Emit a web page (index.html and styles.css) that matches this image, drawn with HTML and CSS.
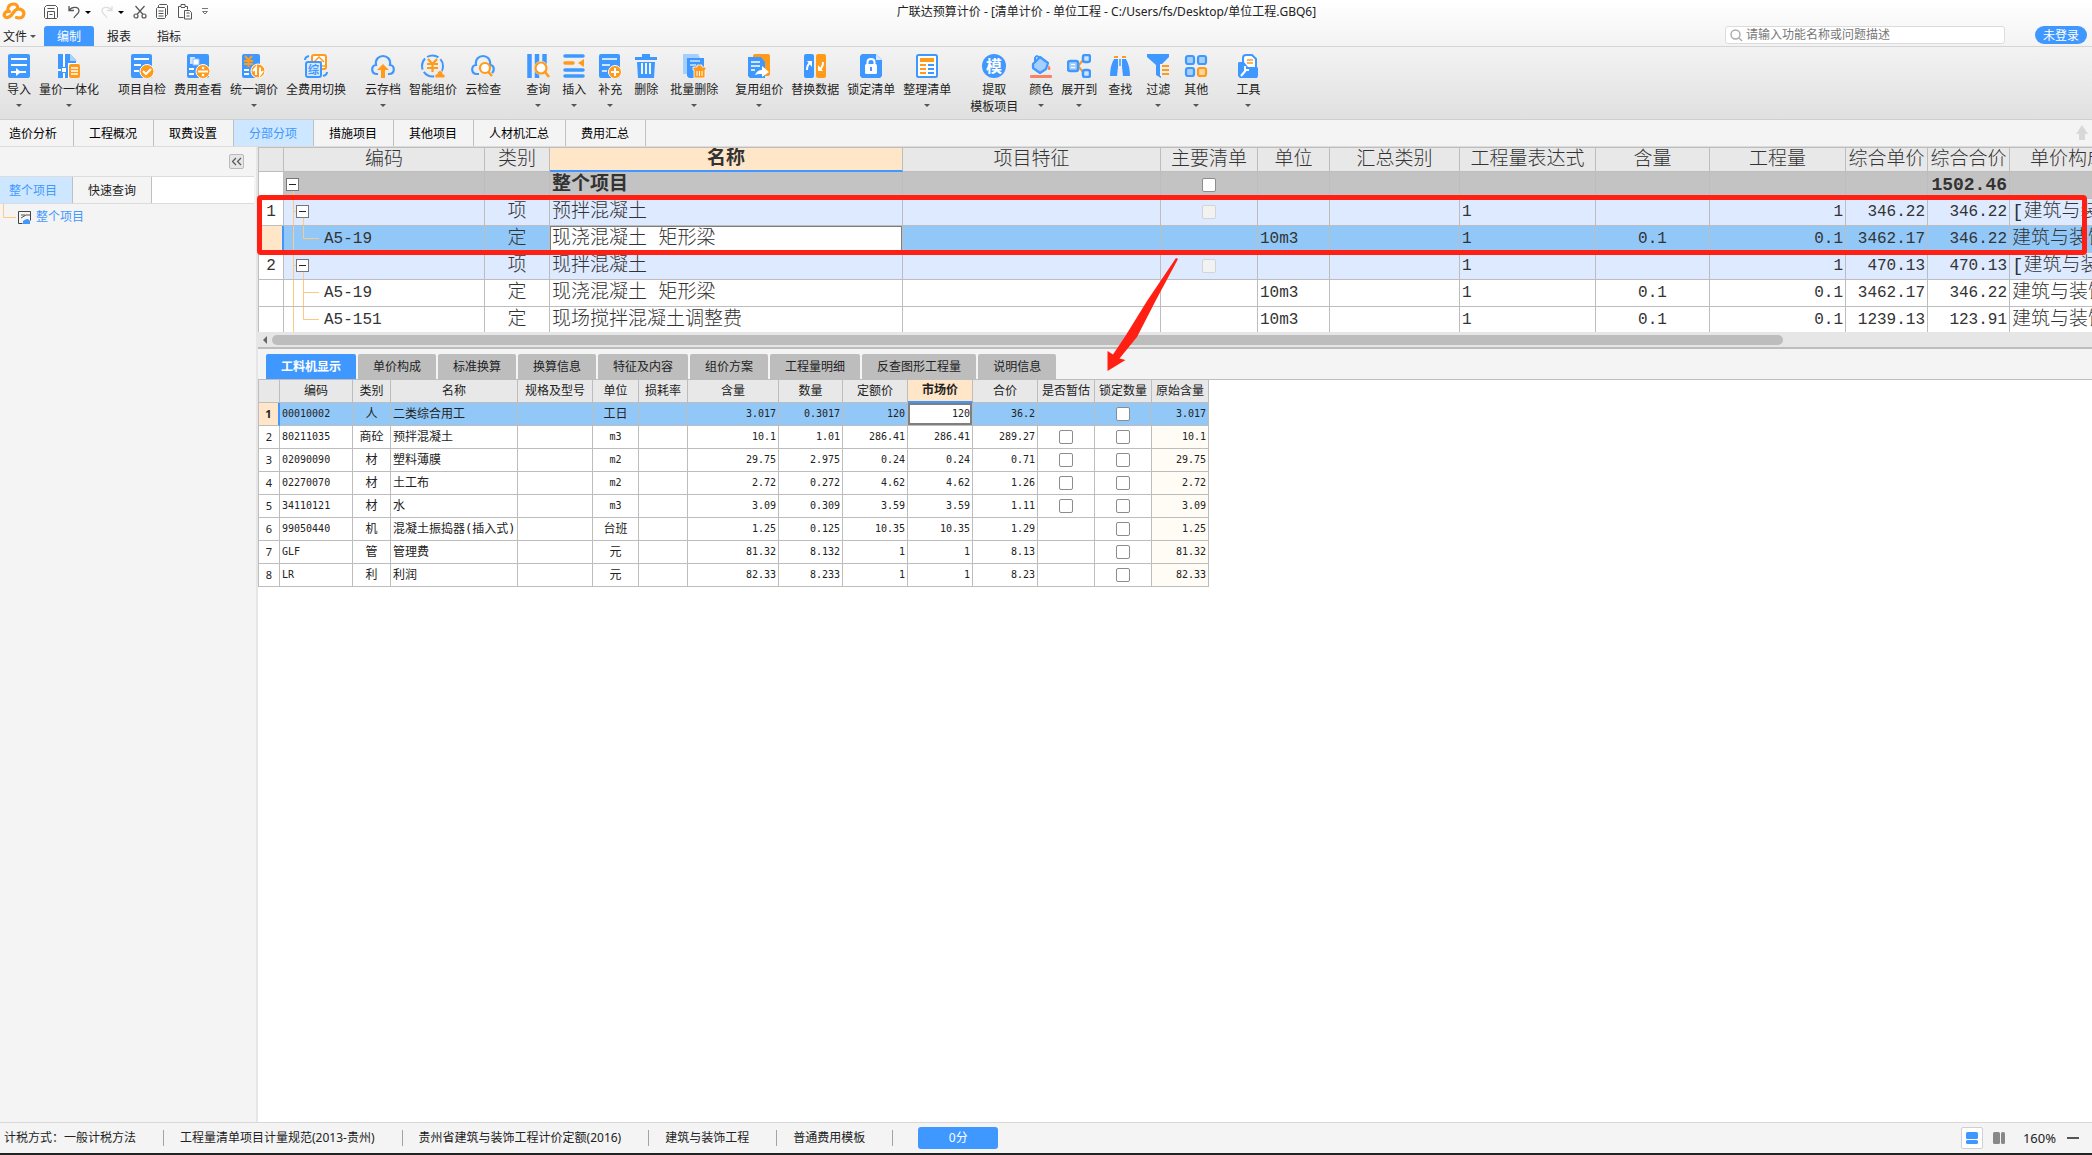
FILE: index.html
```html
<!DOCTYPE html>
<html lang="zh-CN">
<head>
<meta charset="utf-8">
<title>广联达预算计价</title>
<link rel="stylesheet" href="styles.css">
</head>
<body>
<header class="top">
  <div class="titlebar">
    <svg class="logo" width="24" height="18" viewBox="0 0 24 18" fill="none" stroke="#ff9a1a" stroke-width="3.2" stroke-linecap="round" stroke-linejoin="round"><path d="M7.500 9.500C2 9 .500 14.500 4.500 15.500C8 16 9.500 13 11 11C13 8 16 6 19 7.500C23.500 9.500 22.500 16 17 16L14.500 15.500M6 8C5.500 4 8.500 2 11.500 2C14 2 15.500 3.500 15.500 5"/></svg>
    <div class="quick">
      <button aria-label="保存"><svg width="16" height="16" viewBox="0 0 16 16" fill="none" stroke="#555"><path d="M1.500 3.500l2-2h9l2 2v10l-1 1h-11l-1-1zM4.500 14.500v-7h7v7M4.500 4.500h7M6.500 10.500h3"/></svg></button>
      <button aria-label="撤销"><svg width="14" height="14" viewBox="0 0 14 14" fill="none" stroke="#555" stroke-width="1.3"><path d="M2 1v4.500h5M2 5.500C5 1 12 1.500 12 6C12 9 8 10 7 13"/></svg></button>
      <button class="drop" aria-label="撤销列表"><i class="arrow"></i></button>
      <button aria-label="重做"><svg width="14" height="14" viewBox="0 0 14 14" fill="none" stroke="#ddd" stroke-width="1.3"><path d="M12 1v4.500h-5M12 5.500C9 1 2 1.500 2 6C2 9 6 10 7 13"/></svg></button>
      <button class="drop" aria-label="重做列表"><i class="arrow"></i></button>
      <button aria-label="剪切"><svg width="14" height="14" viewBox="0 0 14 14" fill="none" stroke="#555" stroke-width="1.2"><circle cx="3" cy="11" r="2"/><circle cx="11" cy="11" r="2"/><path d="M4 9.500L11.500 1M10 9.500L2.500 1"/></svg></button>
      <button aria-label="复制"><svg width="14" height="16" viewBox="0 0 14 16" fill="none" stroke="#555"><path d="M3.500 3.500v-2l1-1h7l1 1v9l-1 1h-1M1.500 4.500l1-1h7l1 1v9l-1 1h-7l-1-1zM3.500 7h5M3.500 9.500h5M3.500 12h5"/></svg></button>
      <button aria-label="粘贴"><svg width="16" height="16" viewBox="0 0 16 16" fill="none" stroke="#555"><path d="M6.500 13.500h-5v-11h2.500v-2h4v2h2.500v3M4 3.500h4M7.500 6.500h5l2 2v6.500h-7zM9.500 9h3M9.500 12h3"/></svg></button>
      <button aria-label="自定义"><svg width="8" height="8" viewBox="0 0 8 8" fill="none" stroke="#777"><path d="M1 .500h6M1.500 3.500h5L4 6z"/></svg></button>
    </div>
    <h1>广联达预算计价 - [清单计价 - 单位工程 - C:/Users/fs/Desktop/单位工程.GBQ6]</h1>
  </div>
  <nav class="menubar">
    <button class="file">文件<i class="arrow"></i></button>
    <button class="on">编制</button>
    <button>报表</button>
    <button>指标</button>
    <label class="search"><svg width="13" height="13" viewBox="0 0 13 13" fill="none" stroke="#aaa" stroke-width="1.400"><circle cx="5.500" cy="5.500" r="4.500"/><path d="M9 9l3 3"/></svg><input type="text" placeholder="请输入功能名称或问题描述" aria-label="搜索"></label>
    <button class="login">未登录</button>
  </nav>
</header>

<div class="ribbon">
  <div class="group">
    <button><svg viewBox="0 0 24 24"><rect x="1" width="22" height="24" rx="2" fill="#3f98ff"/><g stroke="#fff" stroke-width="2"><path d="M4 5h16M4 11h16"/><path d="M4 18h5M12 18h7"/></g><path d="M9 14l5 4-5 4z" fill="#fff"/></svg><span>导入</span><i class="arrow"></i></button>
    <button><svg viewBox="0 0 24 24"><path d="M1 0h12l6 6v18H1z" fill="#3f98ff"/><path d="M13 0l7 7h-7z" fill="#a9d2ff"/><path d="M7 0v13M1 16h3M7 19v5" stroke="#fff" stroke-width="2"/><rect x="5" y="14" width="4" height="4" fill="#fff"/><path d="M11 9h11v15H11z" fill="#fff"/><rect x="12" y="10" width="11" height="14" rx="2" fill="#ff9a1a"/><path d="M14 14h7M14 17h7M14 20h7" stroke="#fff" stroke-width="1.500"/></svg><span>量价一体化</span><i class="arrow"></i></button>
  </div>
  <div class="group">
    <button><svg viewBox="0 0 24 24"><rect x="1" width="21" height="24" rx="2" fill="#3f98ff"/><path d="M4 5h15M4 11h7M4 17h5" stroke="#fff" stroke-width="2"/><circle cx="17" cy="17.500" r="7" fill="#ff9a1a" stroke="#fff"/><path d="M13 17l3 3 5-5" fill="none" stroke="#fff" stroke-width="2"/></svg><span>项目自检</span></button>
    <button><svg viewBox="0 0 24 24"><rect x="1" width="22" height="24" rx="2" fill="#3f98ff"/><path d="M4 3h5v7H4z" fill="#cfe5ff"/><path d="M7 5h6v6H7z" fill="#fff" stroke="#8fc2ff"/><path d="M3 15h5M3 20h5" stroke="#fff" stroke-width="2"/><circle cx="17" cy="17.500" r="7" fill="#ff9a1a" stroke="#fff"/><path d="M12 17.500h10" stroke="#fff" stroke-width="2"/><circle cx="17" cy="14" r="1.300" fill="#fff"/><circle cx="17" cy="21" r="1.300" fill="#fff"/></svg><span>费用查看</span></button>
    <button><svg viewBox="0 0 24 24"><rect width="18" height="24" rx="2" fill="#3f98ff"/><path d="M3 2l3.500 4L10 2M2 7h9M2 10h9M6.500 6v7" fill="none" stroke="#ff9a1a" stroke-width="2"/><path d="M2 16h5M2 20h5" stroke="#fff" stroke-width="2"/><circle cx="16" cy="17" r="7" fill="#ff9a1a" stroke="#fff"/><path d="M11 17l3-3.500v7.500M21 17l-3 4v-7.500" fill="none" stroke="#fff" stroke-width="2"/></svg><span>统一调价</span><i class="arrow"></i></button>
    <button><svg viewBox="0 0 24 24"><rect x="8" y="1" width="14" height="14" rx="2" fill="#fff" stroke="#ff9a1a" stroke-width="2"/><path d="M10 8l5-5 5 5M12 8h6M15 8v4M18 12h3" fill="none" stroke="#ff9a1a" stroke-width="1.500"/><rect x="2" y="8" width="15" height="15" rx="2" fill="#d7eaff" stroke="#3f98ff" stroke-width="2"/><text x="4" y="20" font-size="11" font-weight="700" fill="#3f98ff">综</text><path d="M1 6q0-3 4-4M23 18q0 3-4 4" fill="none" stroke="#3f98ff" stroke-width="2"/></svg><span>全费用切换</span></button>
  </div>
  <div class="group">
    <button><svg viewBox="0 0 24 24"><path d="M7 20H6C-.500 20 0 11 5 11C4 5 8 2 12 2s8 3 7 9c5 0 5.500 9-1 9h-1" fill="none" stroke="#3f98ff" stroke-width="2.200"/><path d="M12 10l6 6h-4v8h-4v-8H6z" fill="#ff9a1a"/></svg><span>云存档</span><i class="arrow"></i></button>
    <button><svg viewBox="0 0 24 24"><circle cx="11.500" cy="12" r="10.500" fill="none" stroke="#3f98ff" stroke-width="2" stroke-dasharray="12 2.500"/><path d="M7 5l4.500 5L16 5M6 10h11M6 14h11M11.500 9v9" fill="none" stroke="#ff9a1a" stroke-width="2.200"/><path d="M14 24c-1-4 2-4 2-4 1-5 6-4 6 0 2 0 3 3 1 4z" fill="#ff9a1a" stroke="#eee"/></svg><span>智能组价</span></button>
    <button><svg viewBox="0 0 24 24"><path d="M8 20H6C-.500 20 0 11 5 11C4 5 8 2 12 2s8 3 7 9c4 0 5 5 2 8" fill="none" stroke="#3f98ff" stroke-width="2.200"/><circle cx="14" cy="14" r="5" fill="#fff" stroke="#ff9a1a" stroke-width="2.200"/><path d="M17 17.500l4 4.500" stroke="#ff9a1a" stroke-width="2.500"/></svg><span>云检查</span></button>
  </div>
  <div class="group wide">
    <button><svg viewBox="0 0 24 24"><path d="M3.500 0v24M11 0v24M18.500 0v10" stroke="#3f98ff" stroke-width="4.500"/><circle cx="15" cy="14" r="7" fill="#f0f0f0"/><circle cx="15" cy="14" r="5.500" fill="#fff" stroke="#ff9a1a" stroke-width="2.200"/><path d="M19 18l4 5" stroke="#ff9a1a" stroke-width="2.500"/></svg><span>查询</span><i class="arrow"></i></button>
    <button><svg viewBox="0 0 24 24" stroke="#3f98ff" stroke-width="3.500" stroke-linecap="round"><path d="M3 2h18M3 16h18M3 22h18"/><path d="M3 9h8" stroke="#ff9a1a"/><path d="M22 5v8l-6-4z" fill="#ff9a1a" stroke="none"/></svg><span>插入</span><i class="arrow"></i></button>
    <button><svg viewBox="0 0 24 24"><rect x="1" width="21" height="24" rx="2" fill="#3f98ff"/><path d="M4 5h15M4 11h8M4 17h5" stroke="#fff" stroke-width="1.500"/><circle cx="17" cy="18" r="6.500" fill="#ff9a1a" stroke="#fff"/><path d="M17 14v8M13 18h8" stroke="#fff" stroke-width="2"/></svg><span>补充</span><i class="arrow"></i></button>
    <button><svg viewBox="0 0 24 24"><path d="M1 3h7V0h8v3h7v3H1zM3 8h18l-1 16H4z" fill="#3f98ff"/><path d="M8 9v11M12 9v11M16 9v11" stroke="#fff" stroke-width="1.800"/></svg><span>删除</span></button>
    <button><svg viewBox="0 0 24 24"><path d="M1 0h15l2 4v16H1z" fill="#a5cfff"/><path d="M5 4h17v20H7l-2-2z" fill="#3f98ff"/><path d="M8 7h10M8 11h6" stroke="#cfe5ff" stroke-width="1.500"/><path d="M11 13h4v-2h5v2h4v3h-1v8H12v-8h-1z" fill="#ff9a1a" stroke="#fff" stroke-width=".8"/><path d="M15 17v5M17.500 17v5M20 17v5" stroke="#fff"/></svg><span>批量删除</span><i class="arrow"></i></button>
  </div>
  <div class="group">
    <button><svg viewBox="0 0 24 24"><rect x="6" width="17" height="22" rx="2" fill="#ff9a1a"/><path d="M1 3h13l4 5v16H3l-2-2z" fill="#3f98ff"/><path d="M4 8h9M4 12h9M4 16h4" stroke="#fff" stroke-width="1.500"/><path d="M8 21q2-5 7-5v-4l7 6-7 5v-3q-4-.500-7 1z" fill="#fff"/></svg><span>复用组价</span><i class="arrow"></i></button>
    <button><svg viewBox="0 0 24 24"><rect x="1" width="10" height="24" rx="2" fill="#3f98ff"/><rect x="13" width="10" height="24" rx="2" fill="#ff9a1a"/><path d="M4 16q0-5 3-7M20 8q0 5-3 7" fill="none" stroke="#fff" stroke-width="2"/><path d="M4 7h5v6zM15 17v-6l5 6z" fill="#fff"/></svg><span>替换数据</span></button>
    <button><svg viewBox="0 0 24 24"><path d="M1 2l2-2h14l6 6v16l-2 2H3l-2-2z" fill="#3f98ff"/><path d="M17 0l6 6h-6z" fill="#d5e8ff"/><rect x="6" y="10" width="12" height="10" rx="1.500" fill="#fff"/><path d="M8.500 11V8q0-3 3.500-3t3.500 3v3" fill="none" stroke="#fff" stroke-width="2"/><path d="M12 13v4" stroke="#3f98ff" stroke-width="2"/></svg><span>锁定清单</span></button>
    <button><svg viewBox="0 0 24 24"><rect x="2" y="1" width="20" height="22" rx="1.500" fill="#fff" stroke="#3f98ff" stroke-width="2"/><rect x="5" y="4" width="14" height="4" fill="#ff9a1a"/><path d="M5 11h6M5 15h6M5 19h6" stroke="#ff9a1a" stroke-width="2"/><path d="M13 11h6M13 15h6M13 19h6" stroke="#3f98ff" stroke-width="2"/></svg><span>整理清单</span><i class="arrow"></i></button>
  </div>
  <div class="group tight">
    <button><svg viewBox="0 0 24 24"><circle cx="12" cy="12" r="12" fill="#3f98ff"/><text x="4" y="18" font-size="16" font-weight="700" fill="#fff">模</text></svg><span>提取<br>模板项目</span></button>
  </div>
  <div class="group tight">
    <button><svg viewBox="0 0 24 24"><path d="M4 10L11 3l8 6-2 6-6 4-7-5z" fill="#a5cfff" stroke="#3f98ff" stroke-width="2.200" stroke-linejoin="round"/><path d="M6 9V4q2-4 4 0" fill="none" stroke="#3f98ff" stroke-width="2"/><path d="M20 11q3 5 0 5t0-5" fill="#f98260"/><rect x="1" y="21" width="22" height="3" rx="1" fill="#f98260"/></svg><span>颜色</span><i class="arrow"></i></button>
    <button><svg viewBox="0 0 24 24"><path d="M11 12l6-7M11 12l6 7" stroke="#ff9a1a" stroke-width="2"/><rect x="1" y="7" width="10" height="10" rx="2" fill="#a5cfff" stroke="#3f98ff" stroke-width="2.500"/><path d="M4 10.500h4M4 13.500h4" stroke="#fff"/><rect x="16" y="1" width="7" height="7" rx="2" fill="#cfe5ff" stroke="#3f98ff" stroke-width="2.500"/><rect x="16" y="16" width="7" height="7" rx="2" fill="#cfe5ff" stroke="#3f98ff" stroke-width="2.500"/></svg><span>展开到</span><i class="arrow"></i></button>
  </div>
  <div class="group last">
    <button><svg viewBox="0 0 24 24"><path d="M6 5h4v8l-1 9H2q0-10 4-17zM18 5h-4v8l1 9h7q0-10-4-17z" fill="#3f98ff"/><path d="M6 3h4M14 3h4" stroke="#ff9a1a" stroke-width="2"/><path d="M12 5v7" stroke="#3f98ff" stroke-width="1.500"/></svg><span>查找</span></button>
    <button><svg viewBox="0 0 24 24"><path d="M1 0h22v3l-8 8v13l-5-3V11L1 3z" fill="#3f98ff"/><path d="M14 10h9v12h-9z" fill="#eee"/><path d="M16 12h7M16 16h7M16 20h7" stroke="#ff9a1a" stroke-width="2"/></svg><span>过滤</span><i class="arrow"></i></button>
    <button><svg viewBox="0 0 24 24" fill="#a5cfff" stroke="#3f98ff" stroke-width="2.200"><rect x="2" y="2" width="8" height="8" rx="2"/><rect x="14" y="2" width="8" height="8" rx="2"/><rect x="2" y="14" width="8" height="8" rx="2"/><rect x="14" y="14" width="8" height="8" rx="2" fill="#ffd49b" stroke="#ff9a1a"/></svg><span>其他</span><i class="arrow"></i></button>
  </div>
  <div class="group">
    <button><svg viewBox="0 0 24 24"><path d="M7 12V4q0-3 3-3h6l4 4v9" fill="#fff" stroke="#3f98ff" stroke-width="2"/><path d="M11 6h6M11 9h6" stroke="#ff9a1a" stroke-width="1.500"/><path d="M3 8h5l4 5h9l1 1v8l-1 2H4l-2-2V9z" fill="#3f98ff"/><path d="M5 22l5-6" stroke="#fff" stroke-width="2"/><path d="M9 12v4h4" fill="none" stroke="#fff" stroke-width="1.800"/></svg><span>工具</span><i class="arrow"></i></button>
  </div>
</div>

<nav class="tabs">
  <button>造价分析</button><button>工程概况</button><button>取费设置</button><button class="on">分部分项</button><button>措施项目</button><button>其他项目</button><button>人材机汇总</button><button>费用汇总</button>
  <svg class="up" width="12" height="16" viewBox="0 0 12 16" fill="#d8d8d8"><path d="M6 0l6 9H9v6H3V9H0z"/></svg>
</nav>

<main class="work">
  <aside class="side">
    <div class="side-head"><button aria-label="收起"><svg width="15" height="15" viewBox="0 0 15 15" fill="none" stroke="#555" stroke-width="1.200"><path d="M7 4L3.500 7.500L7 11M12 4L8.500 7.500L12 11"/></svg></button></div>
    <div class="side-tabs"><button class="on">整个项目</button><button>快速查询</button></div>
    <a class="node" href="#"><svg width="32" height="26" viewBox="0 0 32 26" fill="none"><path d="M3.500 0v13.500H16" stroke="#ffc983"/><path d="M22.500 19.500h-4v-12h12v9" stroke="#444"/><path d="M21 14l5-3h4M21 11h4" stroke="#555"/><path d="M23 20v-3q5-4 7 0v3z" fill="#3f98ff"/></svg>整个项目</a>
  </aside>

  <section class="content">
    <div class="bill">
      <div class="bill-view">
      <table>
        <colgroup><col class="b0"><col class="b1"><col class="b2"><col class="b3"><col class="b4"><col class="b5"><col class="b6"><col class="b7"><col class="b8"><col class="b9"><col class="b8"><col class="b10"><col class="b10"><col class="b11"></colgroup>
        <thead><tr><th></th><th>编码</th><th>类别</th><th class="cur">名称</th><th>项目特征</th><th>主要清单</th><th>单位</th><th>汇总类别</th><th>工程量表达式</th><th>含量</th><th>工程量</th><th>综合单价</th><th>综合合价</th><th>单价构成文件</th></tr></thead>
        <tbody>
        <tr class="total"><td class="no"></td><td class="code"><button aria-label="折叠"><svg width="40" height="26" viewBox="0 0 40 26"><path d="M9.500 18v8" stroke="#ffc983"/><rect x="2.500" y="6.500" width="12" height="12" fill="#fff" stroke="#777"/><path d="M5 12.500h7" stroke="#222"/></svg></button></td><td></td><td>整个项目</td><td></td><td class="c"><input type="checkbox" aria-label="主要清单"></td><td></td><td></td><td></td><td></td><td></td><td></td><td class="n">1502.46</td><td></td></tr>
        <tr class="item"><td class="no">1</td><td class="code"><button aria-label="折叠"><svg width="40" height="26" viewBox="0 0 40 26"><path d="M9.500 0v26M9.500 12.500h4M19.500 18v8" stroke="#ffc983"/><rect x="12.500" y="6.500" width="12" height="12" fill="#fff" stroke="#777"/><path d="M15 12.500h7" stroke="#222"/></svg></button></td><td class="c">项</td><td>预拌混凝土</td><td></td><td class="c"><input type="checkbox" disabled aria-label="主要清单"></td><td></td><td></td><td class="m">1</td><td></td><td class="n">1</td><td class="n">346.22</td><td class="n">346.22</td><td>[建筑与装饰工程]</td></tr>
        <tr class="sel"><td class="no"></td><td class="code"><svg width="40" height="26" viewBox="0 0 40 26" fill="none"><path d="M9.500 0v26M19.500 0v12.500H35" stroke="#ffc983"/></svg>A5-19</td><td class="c">定</td><td class="edit">现浇混凝土 矩形梁</td><td></td><td></td><td class="m">10m3</td><td></td><td class="m">1</td><td class="m c">0.1</td><td class="n">0.1</td><td class="n">3462.17</td><td class="n">346.22</td><td>建筑与装饰工程</td></tr>
        <tr class="item"><td class="no">2</td><td class="code"><button aria-label="折叠"><svg width="40" height="26" viewBox="0 0 40 26"><path d="M9.500 0v26M9.500 12.500h4M19.500 18v8" stroke="#ffc983"/><rect x="12.500" y="6.500" width="12" height="12" fill="#fff" stroke="#777"/><path d="M15 12.500h7" stroke="#222"/></svg></button></td><td class="c">项</td><td>现拌混凝土</td><td></td><td class="c"><input type="checkbox" disabled aria-label="主要清单"></td><td></td><td></td><td class="m">1</td><td></td><td class="n">1</td><td class="n">470.13</td><td class="n">470.13</td><td>[建筑与装饰工程]</td></tr>
        <tr><td class="no"></td><td class="code"><svg width="40" height="26" viewBox="0 0 40 26" fill="none"><path d="M9.500 0v26M19.500 0v26M19.500 12.500H35" stroke="#ffc983"/></svg>A5-19</td><td class="c">定</td><td>现浇混凝土 矩形梁</td><td></td><td></td><td class="m">10m3</td><td></td><td class="m">1</td><td class="m c">0.1</td><td class="n">0.1</td><td class="n">3462.17</td><td class="n">346.22</td><td>建筑与装饰工程</td></tr>
        <tr><td class="no"></td><td class="code"><svg width="40" height="26" viewBox="0 0 40 26" fill="none"><path d="M9.500 0v26M19.500 0v12.500H35" stroke="#ffc983"/></svg>A5-151</td><td class="c">定</td><td>现场搅拌混凝土调整费</td><td></td><td></td><td class="m">10m3</td><td></td><td class="m">1</td><td class="m c">0.1</td><td class="n">0.1</td><td class="n">1239.13</td><td class="n">123.91</td><td>建筑与装饰工程</td></tr>
        </tbody>
      </table>
      </div>
      <div class="hscroll"><i></i><div><b></b></div></div>
      <div class="mark"></div>
      <svg class="mark-arrow" width="72" height="114" viewBox="0 0 72 114" fill="#ff2013"><path d="M70 0L41 43L20 77L7 96.500L1.500 93V113L19.500 102L13.500 100.500L31 79L50 42L72 1z"/></svg>
    </div>

    <nav class="detail-tabs">
      <button class="on">工料机显示</button><button>单价构成</button><button>标准换算</button><button>换算信息</button><button>特征及内容</button><button>组价方案</button><button>工程量明细</button><button>反查图形工程量</button><button>说明信息</button>
    </nav>
    <div class="detail">
      <table>
        <colgroup><col class="d0"><col class="d1"><col class="d2"><col class="d3"><col class="d4"><col class="d5"><col class="d6"><col class="d7"><col class="d8"><col class="d9"><col class="d9"><col class="d9"><col class="d10"><col class="d10"><col class="d10"></colgroup>
        <thead><tr><th></th><th>编码</th><th>类别</th><th>名称</th><th>规格及型号</th><th>单位</th><th>损耗率</th><th>含量</th><th>数量</th><th>定额价</th><th class="cur">市场价</th><th>合价</th><th>是否暂估</th><th>锁定数量</th><th>原始含量</th></tr></thead>
        <tbody>
        <tr class="sel"><td class="no">1</td><td class="m">00010002</td><td class="c">人</td><td>二类综合用工</td><td></td><td class="c">工日</td><td></td><td class="n">3.017</td><td class="n">0.3017</td><td class="n">120</td><td class="n edit">120</td><td class="n">36.2</td><td></td><td class="c"><input type="checkbox" aria-label="锁定数量"></td><td class="n orig">3.017</td></tr>
        <tr><td class="no">2</td><td class="m">80211035</td><td class="c">商砼</td><td>预拌混凝土</td><td></td><td class="m c">m3</td><td></td><td class="n">10.1</td><td class="n">1.01</td><td class="n">286.41</td><td class="n">286.41</td><td class="n">289.27</td><td class="c"><input type="checkbox" aria-label="是否暂估"></td><td class="c"><input type="checkbox" aria-label="锁定数量"></td><td class="n orig">10.1</td></tr>
        <tr><td class="no">3</td><td class="m">02090090</td><td class="c">材</td><td>塑料薄膜</td><td></td><td class="m c">m2</td><td></td><td class="n">29.75</td><td class="n">2.975</td><td class="n">0.24</td><td class="n">0.24</td><td class="n">0.71</td><td class="c"><input type="checkbox" aria-label="是否暂估"></td><td class="c"><input type="checkbox" aria-label="锁定数量"></td><td class="n orig">29.75</td></tr>
        <tr><td class="no">4</td><td class="m">02270070</td><td class="c">材</td><td>土工布</td><td></td><td class="m c">m2</td><td></td><td class="n">2.72</td><td class="n">0.272</td><td class="n">4.62</td><td class="n">4.62</td><td class="n">1.26</td><td class="c"><input type="checkbox" aria-label="是否暂估"></td><td class="c"><input type="checkbox" aria-label="锁定数量"></td><td class="n orig">2.72</td></tr>
        <tr><td class="no">5</td><td class="m">34110121</td><td class="c">材</td><td>水</td><td></td><td class="m c">m3</td><td></td><td class="n">3.09</td><td class="n">0.309</td><td class="n">3.59</td><td class="n">3.59</td><td class="n">1.11</td><td class="c"><input type="checkbox" aria-label="是否暂估"></td><td class="c"><input type="checkbox" aria-label="锁定数量"></td><td class="n orig">3.09</td></tr>
        <tr><td class="no">6</td><td class="m">99050440</td><td class="c">机</td><td>混凝土振捣器(插入式)</td><td></td><td class="c">台班</td><td></td><td class="n">1.25</td><td class="n">0.125</td><td class="n">10.35</td><td class="n">10.35</td><td class="n">1.29</td><td></td><td class="c"><input type="checkbox" aria-label="锁定数量"></td><td class="n orig">1.25</td></tr>
        <tr><td class="no">7</td><td class="m">GLF</td><td class="c">管</td><td>管理费</td><td></td><td class="c">元</td><td></td><td class="n">81.32</td><td class="n">8.132</td><td class="n">1</td><td class="n">1</td><td class="n">8.13</td><td></td><td class="c"><input type="checkbox" aria-label="锁定数量"></td><td class="n orig">81.32</td></tr>
        <tr><td class="no">8</td><td class="m">LR</td><td class="c">利</td><td>利润</td><td></td><td class="c">元</td><td></td><td class="n">82.33</td><td class="n">8.233</td><td class="n">1</td><td class="n">1</td><td class="n">8.23</td><td></td><td class="c"><input type="checkbox" aria-label="锁定数量"></td><td class="n orig">82.33</td></tr>
        </tbody>
      </table>
    </div>
  </section>
</main>

<footer class="status">
  <span>计税方式：一般计税方法</span><span>工程量清单项目计量规范(2013-贵州)</span><span>贵州省建筑与装饰工程计价定额(2016)</span><span>建筑与装饰工程</span><span>普通费用模板</span>
  <button class="score">0分</button>
  <div class="zoom">
    <button class="view on" aria-label="上下布局"><svg width="12" height="12" viewBox="0 0 12 12" fill="#3f98ff"><rect width="12" height="7" rx="1.500"/><rect y="8" width="12" height="4" rx="1.500"/></svg></button>
    <button class="view" aria-label="左右布局"><svg width="12" height="12" viewBox="0 0 12 12" fill="#888"><rect width="7" height="12" rx="1.500"/><rect x="8" width="4" height="12" rx="1.500"/></svg></button>
    <output>160%</output>
    <button class="minus" aria-label="缩小"><svg width="12" height="2" viewBox="0 0 12 2"><path d="M0 1h12" stroke="#555" stroke-width="2"/></svg></button>
  </div>
</footer>
</body>
</html>
```
FILE: styles.css
```css
* { box-sizing: border-box; }
html, body { height: 100%; }
body {
  margin: 0;
  display: flex;
  flex-direction: column;
  overflow: hidden;
  background: #f4f4f4;
  color: #222;
  font: 12px/16px "Noto Sans", "Noto Sans CJK SC", sans-serif;
}
button {
  margin: 0;
  padding: 0;
  border: 0;
  background: none;
  color: inherit;
  font: inherit;
  white-space: nowrap;
}
svg { display: block; flex: none; }
input[type="checkbox"] {
  appearance: none;
  display: block;
  width: 14px;
  height: 14px;
  margin: 0 auto;
  border: 1px solid #8c8c8c;
  border-radius: 2px;
  background: #fff;
}
input[type="checkbox"]:disabled { border-color: #d4d4d4; background: #f2f2f2; }
.arrow {
  width: 0;
  height: 0;
  border: 3px solid transparent;
  border-top-color: #555;
  border-bottom: 0;
}

/* title and menu */
.top { background: linear-gradient(#fff, #f3f3f3); border-bottom: 1px solid #d4d4d4; }
.titlebar { display: flex; align-items: center; height: 24px; padding: 0 2px; }
.logo { margin-top: -2px; }
.quick { display: flex; align-items: center; gap: 8px; height: 20px; margin-left: 17px; }
.quick .drop { width: 8px; margin-left: -5px; }
.quick .arrow { display: block; margin: 0 auto; border-top-color: #000; }
.titlebar h1 {
  flex: 1;
  margin: 0 86px 0 0;
  text-align: center;
  font-size: 12px;
  font-weight: 400;
}
.menubar { display: flex; height: 22px; padding: 2px 5px 0 3px; }
.menubar > button { width: 50px; height: 20px; padding-top: 1px; }
.menubar > .file { display: flex; align-items: center; gap: 3px; width: 41px; }
.menubar > .on { border-radius: 3px 3px 0 0; background: #3f98ff; color: #fff; }
.search {
  display: flex;
  align-items: center;
  width: 280px;
  height: 18px;
  margin: 0 30px 0 auto;
  padding: 0 4px;
  border: 1px solid #dcdcdc;
  border-radius: 3px;
  background: #fff;
}
.search input { flex: 1; min-width: 0; height: 16px; padding: 0 3px; border: 0; outline: 0; background: none; font: inherit; }
.search input::placeholder { color: #777; }
.menubar > .login { width: 52px; height: 18px; border-radius: 9px; background: #3f98ff; color: #fff; }

/* ribbon */
.ribbon {
  display: flex;
  height: 73px;
  padding: 7px 7px 0;
  border-bottom: 1px solid #cfcfcf;
  background: linear-gradient(#f3f3f3, #e0e0e0);
}
.group { display: flex; gap: 8px; margin-right: 19px; }
.group.wide { gap: 12px; margin: 0 17px 0 6px; }
.group.tight { margin-right: 11px; }
.group.last { gap: 14px; margin-right: 28px; }
.group button { display: flex; flex-direction: column; align-items: center; line-height: 17px; }
.group button > svg { width: 24px; height: 24px; }
.group button > span { margin-top: 3px; }
.group .arrow { margin-top: 6px; }

/* page tabs */
.tabs { display: flex; align-items: center; height: 27px; padding-right: 4px; border-bottom: 1px solid #dcdcdc; }
.tabs button { height: 26px; padding: 2px 16px 0 15px; border-right: 1px solid #c0c0c0; color: #000; }
.tabs button:first-child { padding-left: 9px; }
.tabs .on { background: #cce7ff; color: #3f98ff; }
.up { margin-left: auto; }

/* left panel */
.work { flex: 1; display: flex; min-height: 0; }
.side { flex: 0 0 258px; border-right: 2px solid #e6e6e6; }
.side-head { display: flex; justify-content: flex-end; padding: 7px 12px; }
.side-head button { border: 1px solid #bbb; border-radius: 2px; background: #e6e6e6; }
.side-head svg { margin: -1px; }
.side-tabs { display: flex; margin-right: 2px; border: solid #dcdcdc; border-width: 1px 0; background: #fff; }
.side-tabs button { height: 26px; padding: 2px 15px 0; border-right: 1px solid #c0c0c0; background: #f4f4f4; }
.side-tabs .on { padding-left: 9px; background: #cce7ff; color: #3f98ff; }
.node { display: flex; align-items: center; gap: 4px; color: #3f98ff; text-decoration: none; }

/* shared grid look */
.content { flex: 1; display: flex; flex-direction: column; min-width: 0; }
table { table-layout: fixed; border-collapse: separate; border-spacing: 0; border-left: 1px solid #bdbdbd; }
th, td {
  padding: 0 2px;
  border: solid #bdbdbd;
  border-width: 0 1px 1px 0;
  background: #fff;
  overflow: hidden;
  white-space: nowrap;
  text-align: left;
}
th { background: #e8e8e8; text-align: center; font-weight: 400; }
th.cur { border-bottom: 2px solid #3f98ff; background: #ffe6c8; font-weight: 700; }
.c, .no { text-align: center; }
.sel td { background: #92c8f8; }
.sel .no { border-right: 2px solid #3f98ff; background: #ffe6c8; }
.sel .edit { background: #fff; box-shadow: inset 0 0 0 1px #7f7f7f; }

/* bill grid */
.bill { position: relative; border-bottom: 2px solid #bdbdbd; }
.bill-view { height: 185px; overflow: hidden; background: #fff; }
.bill table {
  width: 1907px;
  border-top: 1px solid #bdbdbd;
  color: #333;
  font: 300 19px/26px "Liberation Mono", "Noto Sans CJK SC", monospace;
}
.bill th { height: 24px; line-height: 22px; font-weight: 300; }
.bill th.cur { font-weight: 700; }
.bill td { height: 27px; padding: 0 2px; }
.bill .no, .bill .m, .bill .n, .bill .code { font-size: 16px; }
.bill .no { padding: 0; }
.bill .n { text-align: right; }
.bill .code { padding: 0; }
.bill .code svg { display: inline-block; vertical-align: top; }
.bill .code button { display: block; }
.bill .total td { background: #c3c3c3; border-color: #bdbdbd; font-weight: 700; }
.bill .total .no { background: #fff; }
.bill .total .n { font-size: 18px; }
.bill .item td { background: #deeaff; }
.bill .item .no { background: #fff; }
.b0 { width: 25px; }
.b1 { width: 201px; }
.b2 { width: 65px; }
.b3 { width: 353px; }
.b4 { width: 258px; }
.b5 { width: 97px; }
.b6 { width: 72px; }
.b7 { width: 130px; }
.b8 { width: 136px; }
.b9 { width: 114px; }
.b10 { width: 82px; }
.b11 { width: 155px; }
.hscroll { display: flex; align-items: center; height: 15px; padding-left: 5px; background: #e6e6e6; }
.hscroll i { border: 4px solid transparent; border-right-color: #666; border-left: 0; }
.hscroll div { flex: 1; margin-left: 5px; }
.hscroll b { display: block; width: 83%; height: 10px; border-radius: 5px; background: #bdbdbd; }
.mark {
  position: absolute;
  top: 48px;
  right: 5px;
  left: -1px;
  height: 60px;
  border: 5px solid #ff2013;
  border-radius: 4px;
}
.mark-arrow { position: absolute; top: 111px; left: 848px; z-index: 1; }

/* detail tabs and grid */
.detail-tabs { display: flex; gap: 2px; padding: 5px 8px 0; border-bottom: 1px solid #bdbdbd; }
.detail-tabs button { height: 25px; padding: 0 15px; border-radius: 2px 2px 0 0; background: #bdbdbd; }
.detail-tabs .on { background: #3f98ff; color: #fff; font-weight: 700; }
.detail { flex: 1; background: #fff; }
.detail table { width: 951px; font: 12px/22px "DejaVu Sans Mono", "Noto Sans CJK SC", monospace; }
.detail th { height: 23px; padding: 0; }
.detail th.cur { line-height: 21px; }
.detail td { height: 23px; }
.detail .m, .detail .n { font-size: 10px; }
.detail .n { text-align: right; }
.detail .no { padding: 0; font: 11px/22px "Noto Sans", sans-serif; }
.detail .sel .no { font-weight: 700; }
.detail .sel .edit { box-shadow: inset 0 0 0 2px #7f7f7f; }
.orig { background: #fffbf5; }
.d0 { width: 21px; }
.d1 { width: 73px; }
.d2 { width: 38px; }
.d3 { width: 127px; }
.d4 { width: 75px; }
.d5 { width: 46px; }
.d6 { width: 49px; }
.d7 { width: 91px; }
.d8 { width: 64px; }
.d9 { width: 65px; }
.d10 { width: 57px; }

/* status bar */
.status {
  display: flex;
  align-items: center;
  height: 33px;
  padding: 0 0 0 4px;
  border-top: 1px solid #d8d8d8;
  border-bottom: 2px solid #222;
}
.status > span { padding-right: 27px; margin-right: 16px; border-right: 1px solid #9aa5ad; }
.score { width: 80px; height: 22px; margin-left: 9px; border-radius: 3px; background: #3f98ff; color: #fff; }
.zoom { display: flex; align-items: center; margin-left: auto; padding-right: 13px; }
.view { display: grid; place-items: center; width: 22px; height: 22px; margin-right: 5px; border: 1px solid transparent; border-radius: 2px; }
.view.on { border-color: #d0d0d0; background: #fff; }
.zoom output { margin: 0 11px 0 8px; font-size: 13px; }
```
